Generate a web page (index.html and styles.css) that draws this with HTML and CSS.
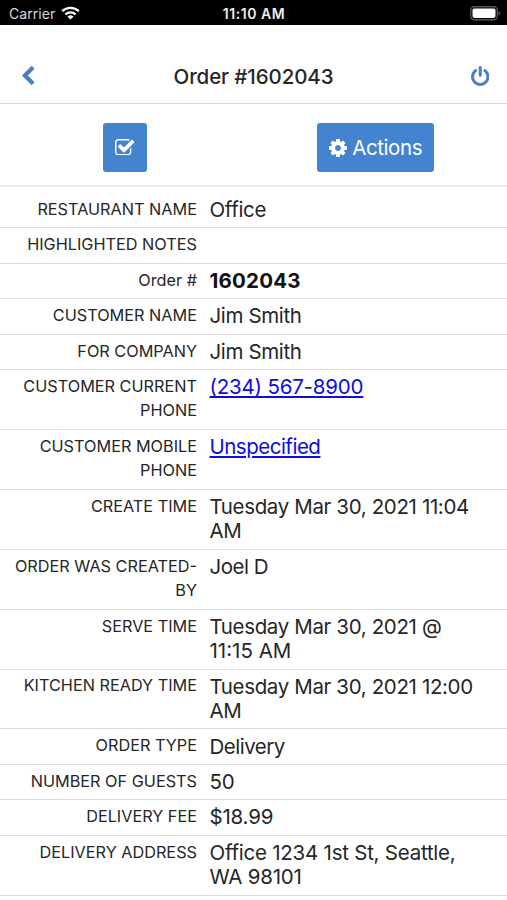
FILE: index.html
```html
<!DOCTYPE html>
<html lang="en">
<head>
<meta charset="utf-8">
<title>Order #1602043</title>
<link rel="stylesheet" href="styles.css">
</head>
<body>
<div class="status">
  <div class="carrier"><span>Carrier</span>
    <svg class="wifi" viewBox="0 0 19 14"><g fill="none" stroke="#fff" stroke-width="2.3"><path d="M1.2 5.2a12 12 0 0 1 16.600 0"/><path d="M4.400 8.500a7.400 7.400 0 0 1 10.200 0"/></g><path fill="#fff" d="M9.500 13.600L6.500 10.700a4.300 4.300 0 0 1 6 0z"/></svg>
  </div>
  <div class="clock">11:10 AM</div>
  <svg class="battery" viewBox="0 0 31 15"><rect x=".75" y=".75" width="26.500" height="13" rx="3.500" fill="none" stroke="#555" stroke-width="1.300"/><rect x="2.500" y="2.500" width="23" height="9.500" rx="2" fill="#fff"/><path d="M28.500 5v4.500q1.700-.8 1.700-2.250T28.500 5z" fill="#555"/></svg>
</div>
<header class="navbar">
  <a class="back"><svg viewBox="410 26 1036 1612"><path d="M1427 301l-531 531 531 531q19 19 19 45t-19 45l-166 166q-19 19-45 19t-45-19l-742-742q-19-19-19-45t19-45l742-742q19-19 45-19t45 19l166 166q19 19 19 45t-19 45z"/></svg></a>
  <h1>Order #1602043</h1>
  <a class="power"><svg viewBox="128 0 1536 1664"><path d="M1664 896q0 156-61 298t-164 245-245 164-298 61-298-61-245-164-164-245-61-298q0-182 80.500-343t226.500-270q43-32 95.500-25t83.500 50q32 42 24.500 94.500t-49.500 84.500q-98 74-151.500 181t-53.500 228q0 104 40.500 198.500t109.500 163.500 163.500 109.500 198.500 40.500 198.500-40.500 163.500-109.500 109.500-163.500 40.500-198.500q0-121-53.500-228t-151.500-181q-42-32-49.500-84.500t24.500-94.500q31-43 84-50t95 25q146 109 226.500 270t80.500 343zm-640-768v640q0 52-38 90t-90 38-90-38-38-90v-640q0-52 38-90t90-38 90 38 38 90z"/></svg></a>
</header>
<div class="toolbar">
  <div class="slot"><button class="btn btn-check"><svg viewBox="64 128 1663 1408"><path d="M1472 930v318q0 119-84.500 203.500t-203.500 84.500h-832q-119 0-203.500-84.500t-84.500-203.500v-832q0-119 84.500-203.500t203.500-84.500h832q63 0 117 25 15 7 18 23 3 17-9 29l-49 49q-10 10-23 10-3 0-9-2-23-6-45-6h-832q-66 0-113 47t-47 113v832q0 66 47 113t113 47h832q66 0 113-47t47-113v-254q0-13 9-22l64-64q10-10 23-10 6 0 12 3 20 8 20 29zm231-489l-814 814q-24 24-57 24t-57-24l-430-430q-24-24-24-57t24-57l110-110q24-24 57-24t57 24l263 263 647-647q24-24 57-24t57 24l110 110q24 24 24 57t-24 57z"/></svg></button></div>
  <div class="slot"><button class="btn btn-actions"><svg viewBox="128 128 1536 1536"><path d="M1152 896q0-106-75-181t-181-75-181 75-75 181 75 181 181 75 181-75 75-181zm512-109v222q0 12-8 23t-20 13l-185 28q-19 54-39 91 35 50 107 138 10 12 10 25t-9 23q-27 37-99 108t-94 71q-12 0-26-9l-138-108q-44 23-91 38-16 136-29 186-7 28-36 28h-222q-14 0-24.500-8.500t-11.500-21.500l-28-184q-49-16-90-37l-141 107q-10 9-25 9-14 0-25-11-126-114-165-168-7-10-7-23 0-12 8-23 15-21 51-66.500t54-70.500q-27-50-41-99l-183-27q-13-2-21-12.500t-8-23.500v-222q0-12 8-23t19-13l186-28q14-46 39-92-40-57-107-138-10-12-10-24 0-10 9-23 26-36 98.500-107.500t94.500-71.500q13 0 26 10l138 107q44-23 91-38 16-136 29-186 7-28 36-28h222q14 0 24.500 8.500t11.500 21.500l28 184q49 16 90 37l142-107q9-9 24-9 13 0 25 10 129 119 165 170 7 8 7 22 0 12-8 23-15 21-51 66.500t-54 70.500q26 50 41 98l183 28q13 2 21 12.500t8 23.500z"/></svg><span>Actions</span></button></div>
</div>
<dl class="details">
  <div class="row"><dt>RESTAURANT NAME</dt><dd>Office</dd></div>
  <div class="row"><dt>HIGHLIGHTED NOTES</dt><dd></dd></div>
  <div class="row"><dt>Order #</dt><dd class="strong">1602043</dd></div>
  <div class="row"><dt>CUSTOMER NAME</dt><dd>Jim Smith</dd></div>
  <div class="row"><dt>FOR COMPANY</dt><dd>Jim Smith</dd></div>
  <div class="row"><dt>CUSTOMER CURRENT<br>PHONE</dt><dd class="digits"><a href="tel:2345678900">(234) 567-8900</a></dd></div>
  <div class="row"><dt>CUSTOMER MOBILE<br>PHONE</dt><dd class="word"><a href="#">Unspecified</a></dd></div>
  <div class="row"><dt>CREATE TIME</dt><dd>Tuesday Mar 30, 2021 11:04<br>AM</dd></div>
  <div class="row"><dt>ORDER WAS CREATED-<br>BY</dt><dd class="word">Joel D</dd></div>
  <div class="row"><dt>SERVE TIME</dt><dd>Tuesday Mar 30, 2021 @<br><span class="plain">11:15 AM</span></dd></div>
  <div class="row"><dt>KITCHEN READY TIME</dt><dd>Tuesday Mar 30, 2021 12:00<br>AM</dd></div>
  <div class="row"><dt>ORDER TYPE</dt><dd class="word">Delivery</dd></div>
  <div class="row"><dt>NUMBER OF GUESTS</dt><dd class="digits">50</dd></div>
  <div class="row"><dt>DELIVERY FEE</dt><dd class="digits">$18.99</dd></div>
  <div class="row"><dt>DELIVERY ADDRESS</dt><dd class="address">Office 1234 1st St, Seattle,<br>WA 98101</dd></div>
</dl>
</body>
</html>
```
FILE: styles.css
```css
* { box-sizing: border-box; }
body {
  margin: 0;
  height: 900px;
  overflow: hidden;
  background: #fff;
  color: #262626;
  font-family: Inter, "Liberation Sans", sans-serif;
}
svg { display: block; }
.status {
  height: 25px;
  background: #000;
  color: #fff;
  display: grid;
  grid-template-columns: 1fr auto 1fr;
  align-items: center;
  padding: 2px 6px 0 9px;
  font-size: 14px;
}
.carrier { display: flex; align-items: center; gap: 6px; color: #d8d8d8; letter-spacing: 0.050px; }
.wifi { width: 19px; height: 14px; margin-top: -2px; }
.clock { font-weight: 600; font-size: 14px; letter-spacing: 0.550px; color: #eee; margin-right: 2px; }
.battery { width: 31px; height: 15px; justify-self: end; }
.navbar {
  height: 79px;
  border-bottom: 1.500px solid #d6d6d6;
  display: grid;
  grid-template-columns: 1fr auto 1fr;
  align-items: center;
  padding: 25px 18px 0 22px;
}
.navbar h1 { margin: 0 4px 0 0; font-size: 20.500px; font-weight: 500; letter-spacing: -0.100px; }
.navbar svg { fill: #4a7fc0; margin-bottom: 1.500px; }
.back svg { width: 12.500px; height: 19px; }
.power { justify-self: end; }
.power svg { width: 18.500px; height: 20px; }
.toolbar {
  height: 83px;
  border-bottom: 2px solid #e8e8e8;
  display: flex;
  align-items: center;
  padding: 6px 6.500px 0 0;
}
.slot { flex: 1 1 0; display: flex; justify-content: center; }
.btn {
  height: 49px;
  border: 0;
  border-radius: 3px;
  background: #4383cf;
  color: #fff;
  font: 20.500px Inter, "Liberation Sans", sans-serif;
  display: flex;
  align-items: center;
  justify-content: center;
  padding: 0;
}
.btn svg { fill: #fff; }
.btn-check { width: 44px; }
.btn-check svg { width: 19.300px; height: 16.500px; margin-bottom: 1px; }
.btn-actions { width: 117.500px; gap: 5.500px; letter-spacing: -0.420px; }
.btn-actions svg { width: 18px; height: 18px; }
.details { margin: 0; }
.row {
  display: grid;
  grid-template-columns: 197px 1fr;
  column-gap: 12.500px;
  border-bottom: 1px solid #ddd;
  padding: 5px 0 5.060px;
  line-height: 24.400px;
}
.row:first-child { padding-top: 11px; }
dt { font-size: 16.250px; text-align: right; min-height: 24.400px; margin: -1.200px 0 1.200px; }
dd { margin: 0.100px 0 -0.100px; font-size: 20.500px; letter-spacing: -0.360px; white-space: nowrap; }
.digits { letter-spacing: -0.200px; }
.word { letter-spacing: -0.500px; }
.address { letter-spacing: -0.240px; }
.plain { letter-spacing: 0; }
.strong { font-weight: 700; letter-spacing: 0.200px; color: #111; }
dd a { color: #0d0de0; text-decoration: underline; text-decoration-skip-ink: auto; }
```
